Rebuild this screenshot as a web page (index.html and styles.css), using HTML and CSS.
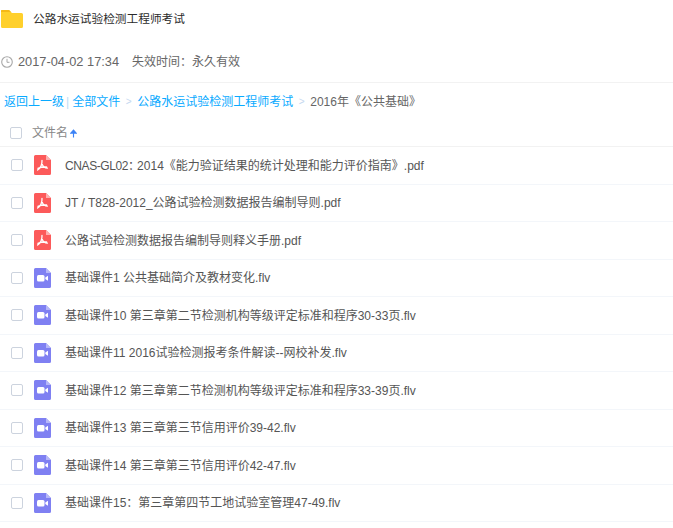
FILE: index.html
```html
<!DOCTYPE html>
<html lang="zh-CN">
<head>
<meta charset="utf-8">
<title>公路水运试验检测工程师考试</title>
<link rel="stylesheet" href="styles.css">
</head>
<body>
<svg class="defs" width="0" height="0">
  <symbol id="pdf" viewBox="0 0 17 20">
    <path d="M1.500 0H12L17 5V18.500A1.500 1.500 0 0 1 15.500 20H1.500A1.500 1.500 0 0 1 0 18.500V1.500A1.500 1.500 0 0 1 1.500 0Z" fill="#fc5a5a"/>
    <path d="M12 0L17 5H12Z" fill="#fdb0b0"/>
    <path d="M8 5.500C8.200 9 6.800 12.600 3.600 15M8.200 9.300C9 11.600 10.800 13 13.500 13.100M3.900 13.300C6.300 12.300 9.400 11.900 12.600 12" fill="none" stroke="#fff" stroke-width="1.300" stroke-linecap="round"/>
  </symbol>
  <symbol id="vid" viewBox="0 0 17 20">
    <path d="M1.500 0H12L17 5V18.500A1.500 1.500 0 0 1 15.500 20H1.500A1.500 1.500 0 0 1 0 18.500V1.500A1.500 1.500 0 0 1 1.500 0Z" fill="#7f80f2"/>
    <path d="M12 0L17 5H12Z" fill="#b6b7f8"/>
    <rect x="3" y="7" width="7.500" height="6.500" rx="1.500" fill="#fff"/>
    <path d="M11.300 9.500L14 7.800V12.700L11.300 11Z" fill="#fff"/>
  </symbol>
</svg>
<main class="page">
  <header class="title-bar">
    <svg class="folder" viewBox="0 0 22 18" width="22" height="18"><path d="M1 0H8L11 3H20.500A1.500 1.500 0 0 1 22 4.500V16.500A1.500 1.500 0 0 1 20.500 18H1.500A1.500 1.500 0 0 1 0 16.500V1A1 1 0 0 1 1 0Z" fill="#ffd02c"/><path d="M1 0H8L10 2H0V1A1 1 0 0 1 1 0Z" fill="#f5b918"/></svg>
    <h1 class="title">公路水运试验检测工程师考试</h1>
  </header>
  <div class="meta">
    <svg class="clock" viewBox="0 0 12 12" width="12" height="12"><circle cx="6" cy="6" r="5.300" fill="none" stroke="#a8a8a8" stroke-width="1.100"/><path d="M6 2.800V6.300H8.500" fill="none" stroke="#a8a8a8" stroke-width="1"/></svg>
    <span class="date">2017-04-02 17:34</span>
    <span>失效时间：永久有效</span>
  </div>
  <nav class="crumbs">
    <a>返回上一级</a><span class="pipe">|</span><a>全部文件</a><span class="sep">&gt;</span><a>公路水运试验检测工程师考试</a><span class="sep">&gt;</span><span class="cur">2016年《公共基础》</span>
  </nav>
  <div class="list-head">
    <span class="check"></span>
    <span class="col-name">文件名</span>
    <svg class="arrow" viewBox="0 0 8 10" width="7" height="9"><path d="M4 9.500V2M1 4.500L4 1L7 4.500Z" fill="#3b82f6" stroke="#3b82f6" stroke-width="1.300"/></svg>
  </div>
  <ul class="files">
    <li class="row"><span class="check"></span><svg class="ficon"><use href="#pdf"/></svg><span class="fname"><span class="caps">CNAS-GL02</span><span class="narrow">：</span>2014《能力验证结果的统计处理和能力评价指南》.pdf</span></li>
    <li class="row"><span class="check"></span><svg class="ficon"><use href="#pdf"/></svg><span class="fname">JT / T828-2012_公路试验检测数据报告编制导则.pdf</span></li>
    <li class="row"><span class="check"></span><svg class="ficon"><use href="#pdf"/></svg><span class="fname">公路试验检测数据报告编制导则释义手册.pdf</span></li>
    <li class="row"><span class="check"></span><svg class="ficon"><use href="#vid"/></svg><span class="fname">基础课件1 公共基础简介及教材变化.flv</span></li>
    <li class="row"><span class="check"></span><svg class="ficon"><use href="#vid"/></svg><span class="fname">基础课件10 第三章第二节检测机构等级评定标准和程序30-33页.flv</span></li>
    <li class="row"><span class="check"></span><svg class="ficon"><use href="#vid"/></svg><span class="fname">基础课件11 2016试验检测报考条件解读--网校补发.flv</span></li>
    <li class="row"><span class="check"></span><svg class="ficon"><use href="#vid"/></svg><span class="fname">基础课件12 第三章第二节检测机构等级评定标准和程序33-39页.flv</span></li>
    <li class="row"><span class="check"></span><svg class="ficon"><use href="#vid"/></svg><span class="fname">基础课件13 第三章第三节信用评价39-42.flv</span></li>
    <li class="row"><span class="check"></span><svg class="ficon"><use href="#vid"/></svg><span class="fname">基础课件14 第三章第三节信用评价42-47.flv</span></li>
    <li class="row"><span class="check"></span><svg class="ficon"><use href="#vid"/></svg><span class="fname">基础课件15：第三章第四节工地试验室管理47-49.flv</span></li>
  </ul>
</main>
</body>
</html>
```
FILE: styles.css
```css
* { box-sizing: border-box; }
html, body { margin: 0; padding: 0; background: #fff; overflow: hidden; }
body { font-family: "Liberation Sans", "Noto Sans CJK SC", sans-serif; font-size: 12px; line-height: 16px; color: #666; }
.defs { position: absolute; }
.page { width: 673px; height: 528px; overflow: hidden; }
.title-bar { display: flex; align-items: center; height: 22px; margin-top: 8px; padding-left: 1px; gap: 10px; }
.folder { flex: none; }
.title { margin: 0; font-size: 11.700px; line-height: 16px; font-weight: 400; color: #2b2b2b; }
.meta { display: flex; align-items: center; height: 53px; padding: 12px 0 0 1px; border-bottom: 1px solid #f2f2f2; color: #666; }
.clock { flex: none; margin-right: 5px; }
.date { margin-right: 13px; font-size: 12.800px; }
.crumbs { display: flex; align-items: center; height: 35px; padding: 2px 0 0 4px; color: #09aaff; }
.pipe { margin: 0 3px 0 2px; color: #bcdcf5; }
.sep { margin: 0 5.600px; color: #c5d8f0; font-size: 10px; }
.cur { color: #666; }
.list-head { display: flex; align-items: center; height: 29px; padding: 2px 0 0 10px; border-bottom: 1px solid #f2f2f2; color: #888; }
.check { flex: none; display: block; width: 12px; height: 12px; border: 1px solid #ccd3de; border-radius: 2px; background: #fff; }
.col-name { margin-left: 10px; }
.arrow { margin-left: 2px; }
.files { list-style: none; margin: 0; padding: 0; }
.row { display: flex; align-items: center; height: 37.500px; padding-left: 11px; border-bottom: 1px solid #f3f6fa; color: #555; }
.ficon { flex: none; width: 17px; height: 20px; margin-left: 11px; }
.fname { margin: 1px 0 0 14px; white-space: nowrap; }
.caps { letter-spacing: -0.400px; }
.narrow { letter-spacing: -3px; }
```
